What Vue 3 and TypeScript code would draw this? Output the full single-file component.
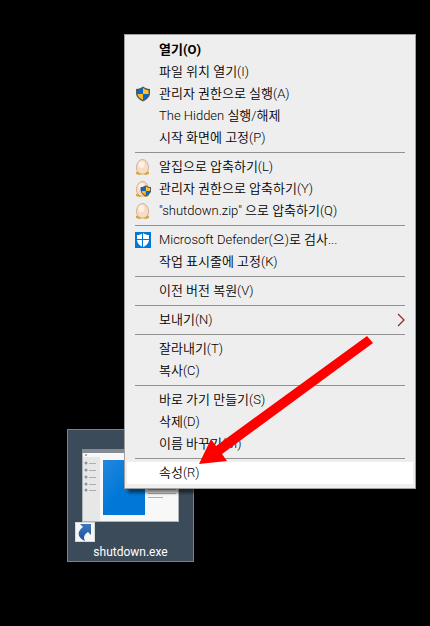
<script setup lang="ts">
type IconName = 'shield' | 'egg' | 'egg-shield' | 'defender'

interface MenuItem {
  label: string
  icon?: IconName
  bold?: boolean
  submenu?: boolean
  active?: boolean
}

const groups: MenuItem[][] = [
  [
    { label: '열기(O)', bold: true },
    { label: '파일 위치 열기(I)' },
    { label: '관리자 권한으로 실행(A)', icon: 'shield' },
    { label: 'The Hidden 실행/해제' },
    { label: '시작 화면에 고정(P)' },
  ],
  [
    { label: '알집으로 압축하기(L)', icon: 'egg' },
    { label: '관리자 권한으로 압축하기(Y)', icon: 'egg-shield' },
    { label: '"shutdown.zip" 으로 압축하기(Q)', icon: 'egg' },
  ],
  [
    { label: 'Microsoft Defender(으)로 검사...', icon: 'defender' },
    { label: '작업 표시줄에 고정(K)' },
  ],
  [{ label: '이전 버전 복원(V)' }],
  [{ label: '보내기(N)', submenu: true }],
  [{ label: '잘라내기(T)' }, { label: '복사(C)' }],
  [
    { label: '바로 가기 만들기(S)' },
    { label: '삭제(D)' },
    { label: '이름 바꾸기(M)' },
  ],
  [{ label: '속성(R)', active: true }],
]
</script>

<template>
  <main class="desktop">
    <button type="button" class="shortcut">
      <svg class="shortcut-icon" width="111" height="96" viewBox="0 0 111 96" aria-hidden="true">
        <defs>
          <linearGradient id="pane" x1="0" y1="0" x2="1" y2="1">
            <stop offset="0" stop-color="#2487df" />
            <stop offset=".5" stop-color="#0078d7" />
          </linearGradient>
          <linearGradient id="jump" x1="0" y1="0" x2="0" y2="1">
            <stop offset="0" stop-color="#3f78bd" />
            <stop offset="1" stop-color="#1c4f98" />
          </linearGradient>
        </defs>
        <rect x="7" y="2" width="97" height="73" fill="#aeb3b8" />
        <rect x="8" y="3" width="95" height="71" fill="#f8f8f8" />
        <rect x="7" y="2" width="97" height="4" fill="#858b91" />
        <rect x="8" y="10" width="17" height="64" fill="#e7e7e7" />
        <rect x="10" y="7" width="2" height="2" fill="#aaa" />
        <g fill="#8e9499">
          <circle cx="11" cy="16" r="1.5" /><circle cx="11" cy="23" r="1.5" />
          <circle cx="11" cy="30" r="1.5" /><circle cx="11" cy="37" r="1.5" />
          <circle cx="11" cy="43" r="1.5" />
        </g>
        <path d="M14 16.500h7M14 23.500h7M14 30.500h7M14 37.500h7M14 43.500h7M73 42.500h28M73 46.500h28M73 50.500h15" stroke="#aaafb3" />
        <rect x="28" y="13" width="42" height="55" fill="url(#pane)" />
        <rect x=".5" y="75.500" width="19" height="19" fill="#f6f6f6" stroke="#d8d8d8" />
        <path d="M5 77h11v11l-3-3c-4 3-5 5-3 9-7-3-9-9-2-14z" fill="url(#jump)" />
      </svg>
      <span class="shortcut-name">shutdown.exe</span>
    </button>

    <div class="menu" role="menu">
      <div v-for="(group, g) in groups" :key="g" class="group" role="group">
        <button
          v-for="item in group"
          :key="item.label"
          type="button"
          role="menuitem"
          class="item"
          :class="{ bold: item.bold, active: item.active }"
        >
          <span class="icon">
            <svg v-if="item.icon" width="16" height="16" viewBox="0 0 16 16" aria-hidden="true">
              <template v-if="item.icon === 'egg' || item.icon === 'egg-shield'">
                <path d="M1 13l3-1 4 2 4-2 2 1v2l-3 1-3-1-4 1-3-1z" fill="#e5a528" />
                <path d="M7.500 .5C11 .5 13.500 4.500 13.500 8.500S11 15 7.500 15 1.500 12.500 1.500 8.500 4 .5 7.500 .5z" fill="#f5dcc5" stroke="#c5a58c" stroke-width=".8" />
                <ellipse cx="6.500" cy="5.500" rx="3" ry="3.500" fill="#fff0e2" />
              </template>
              <g
                v-if="item.icon === 'shield' || item.icon === 'egg-shield'"
                :transform="item.icon === 'egg-shield' ? 'translate(4.800 3.800) scale(.76)' : undefined"
              >
                <path d="M8 .5C10 2 12 2.700 15 3v4c0 4-3 6.500-7 8.500C4 13.500 1 11 1 7V3C4 2.700 6 2 8 .5z" fill="#50585c" />
                <path d="M8 2v6H2.500V4.200C5 4 6.500 3.300 8 2z" fill="#0b67c8" />
                <path d="M8 2c1.500 1.300 3 2 5.500 2.200V8H8z" fill="#ffc12c" />
                <path d="M2.500 8H8v6c-3-1.600-5.500-3.300-5.500-6z" fill="#ffb91c" />
                <path d="M8 8h5.500c0 2.700-2.500 4.400-5.500 6z" fill="#0b67c8" />
              </g>
              <template v-if="item.icon === 'defender'">
                <path d="M0 0h16v16H0z" fill="#0078d7" />
                <path d="M8 1c2 1.400 4 2 6 2v4.500c0 3.500-2.500 6-6 7.500-3.500-1.500-6-4-6-7.500V3c2 0 4-.6 6-2z" fill="#fff" />
                <path d="M7.500 1v14M2 7.500h12" stroke="#0078d7" />
              </template>
            </svg>
          </span>
          <span class="label">{{ item.label }}</span>
          <svg v-if="item.submenu" class="chevron" width="8" height="14" viewBox="0 0 8 14" aria-hidden="true">
            <path d="M1 1l6 6-6 6" fill="none" stroke="#8a2626" stroke-width="1.200" />
          </svg>
        </button>
      </div>
    </div>

    <svg class="pointer" width="176" height="132" viewBox="0 0 176 132" aria-hidden="true">
      <path d="M170 0l6 7L25 118l5 7-28 3 12-25 5 7z" fill="red" />
    </svg>
  </main>
</template>

<style>
body {
  background: #000;
}
</style>

<style scoped>
.desktop {
  position: relative;
  min-height: 100vh;
  box-sizing: border-box;
  padding: 34px 14px 0 124px;
  background: #000;
  font-family: Roboto, "Noto Sans CJK KR", sans-serif;
}

button {
  margin: 0;
  font: inherit;
  border: 0;
}

.menu {
  position: relative;
  padding: 4px 2px;
  border: 1px solid #a0a0a0;
  background: #eee;
  box-shadow: 4px 4px 3px rgba(0, 0, 0, 0.5);
  font-size: 13px;
  font-weight: 350;
}

.group + .group::before {
  content: "";
  display: block;
  height: 1px;
  margin: 3px 8px;
  background: #919191;
}

.item {
  display: flex;
  align-items: center;
  width: 100%;
  height: 22px;
  padding: 0 8px;
  background: transparent;
  color: #000;
  line-height: 22px;
  text-align: left;
}

.item.active {
  background: #fff;
}

.item.bold {
  font-weight: 700;
}

.icon {
  display: flex;
  flex: none;
  width: 24px;
}

.label {
  flex: 1;
  white-space: nowrap;
}

.shortcut {
  position: absolute;
  left: 67px;
  top: 429px;
  display: flex;
  flex-direction: column;
  align-items: center;
  width: 127px;
  padding: 17px 0 0;
  border: 1px solid #718594;
  background: #3c4b5a;
  color: #fff;
  font-size: 12px;
  line-height: 18px;
}

.shortcut-icon {
  overflow: visible;
}

.pointer {
  position: absolute;
  left: 197px;
  top: 336px;
  pointer-events: none;
}
</style>
